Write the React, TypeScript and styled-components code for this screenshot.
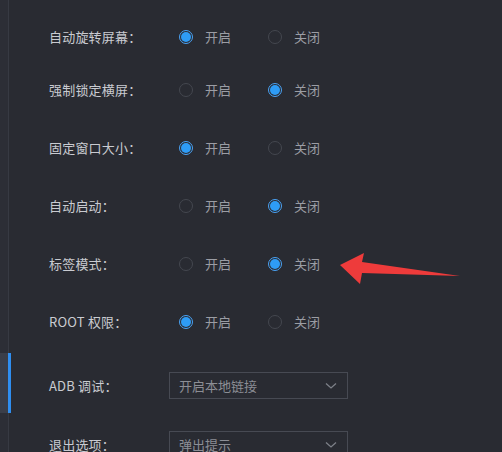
import React from "react";
import styled, { createGlobalStyle } from "styled-components";

const Global = createGlobalStyle`
  html, body { margin: 0; padding: 0; background: #292b32; }
  body { font-family: "Noto Sans CJK SC", "Noto Sans", sans-serif; }
`;

const Page = styled.div`
  position: relative;
  display: flex;
  width: 502px;
  height: 452px;
  overflow: hidden;
  background: #292b32;
`;

const Sidebar = styled.div`
  width: 8px;
  flex: none;
  background: #2c2e36;
  border-right: 1px solid #373a43;
  padding-top: 353px;
  box-sizing: content-box;
`;

const ActiveItem = styled.div`
  width: 8px;
  height: 60px;
  background: #3a3e49;
  border-right: 3px solid #2f8ef0;
`;

const Form = styled.div`
  display: flex;
  flex-direction: column;
  padding-left: 40px;
`;

const Row = styled.div<{ $top: number; $h?: number }>`
  display: flex;
  align-items: center;
  flex: none;
  height: ${(p) => p.$h ?? 20}px;
  margin-top: ${(p) => p.$top}px;
`;

const Label = styled.div`
  width: 120px;
  flex: none;
  font-size: 13px;
  line-height: 20px;
  color: #c9cbd1;
  letter-spacing: 0.2px;
`;

const RadioGroup = styled.div`
  display: flex;
  align-items: center;
`;

const RadioItem = styled.label`
  display: flex;
  align-items: center;
  width: 89px;
  font-size: 13px;
  line-height: 20px;
  color: #9b9da4;
`;

const Circle = styled.span<{ $on: boolean }>`
  width: 14px;
  height: 14px;
  box-sizing: border-box;
  border-radius: 50%;
  border: 1px solid ${(p) => (p.$on ? "#4aa3f5" : "#44474f")};
  margin-left: 10px;
  margin-right: 12px;
  display: flex;
  align-items: center;
  justify-content: center;
  &::after {
    content: "";
    width: 10px;
    height: 10px;
    border-radius: 50%;
    background: ${(p) => (p.$on ? "#2e9cf6" : "transparent")};
  }
`;

const Select = styled.div`
  width: 179px;
  height: 27px;
  box-sizing: border-box;
  border: 1px solid #474a53;
  display: flex;
  align-items: center;
  justify-content: space-between;
  padding: 0 10px 0 9px;
  font-size: 13px;
  color: #8c8e95;
`;

const Arrow = styled.svg`
  position: absolute;
  left: 0;
  top: 0;
  pointer-events: none;
`;

const radios: [string, boolean][] = [
  ["自动旋转屏幕：", true],
  ["强制锁定横屏：", false],
  ["固定窗口大小：", true],
  ["自动启动：", false],
  ["标签模式：", false],
  ["ROOT 权限：", true],
];
const tops = [27, 33, 38, 38, 38, 38];

const Chevron = () => (
  <svg width="12" height="8" viewBox="0 0 12 8">
    <path d="M1 1.5 L6 6 L11 1.5" fill="none" stroke="#7d8088" strokeWidth="1.3" />
  </svg>
);

export default function App() {
  return (
    <>
      <Global />
      <Page>
        <Sidebar>
          <ActiveItem />
        </Sidebar>
        <Form>
          {radios.map(([label, on], i) => (
            <Row key={label} $top={tops[i]}>
              <Label>{label}</Label>
              <RadioGroup>
                <RadioItem>
                  <Circle $on={on} />
                  开启
                </RadioItem>
                <RadioItem>
                  <Circle $on={!on} />
                  关闭
                </RadioItem>
              </RadioGroup>
            </Row>
          ))}
          <Row $top={40} $h={27}>
            <Label>ADB 调试：</Label>
            <Select>
              开启本地链接
              <Chevron />
            </Select>
          </Row>
          <Row $top={32} $h={27}>
            <Label>退出选项：</Label>
            <Select>
              弹出提示
              <Chevron />
            </Select>
          </Row>
        </Form>
        <Arrow width="502" height="452" viewBox="0 0 502 452">
          <polygon
            points="340,265 364,253 362,262 460,276 362,273 360,284"
            fill="#ee3b3b"
          />
        </Arrow>
      </Page>
    </>
  );
}
